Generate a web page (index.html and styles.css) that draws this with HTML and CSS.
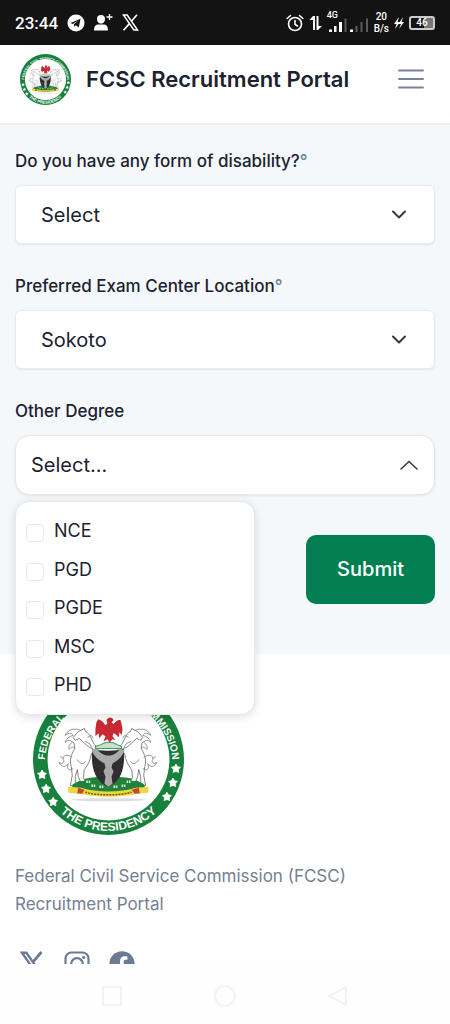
FILE: index.html
```html
<!DOCTYPE html>
<html lang="en">
<head>
<meta charset="utf-8">
<meta name="viewport" content="width=device-width, initial-scale=1">
<title>FCSC Recruitment Portal</title>
<link rel="stylesheet" href="styles.css">
</head>
<body>
<svg class="defs" width="0" height="0" aria-hidden="true">
  <defs>
    <path id="arc-top" d="M11.500 80A63.500 63.500 0 0 1 138.500 80"/>
    <path id="arc-bottom" d="M4 75A71 71 0 0 0 146 75"/>
    <path id="star" d="M0-4.600L1.600-2 4.500-1.300 2.500 1 2.800 4 0 2.800-2.800 4-2.500 1-4.500-1.300-1.600-2Z" stroke="#fff" stroke-linejoin="round" stroke-width=".6"/>
    <g id="horse">
      <path d="M58 64C53 62 50 57 46 54L42 56 40 53C43 50 44 47 48 46L51 44 52 47C57 49 58 56 61 60L65 64 63 68 58 69C57 76 55 80 51 85L50 93 54 101 49 101 45 92 44 85 42 92 42 101 37 101 39 91 38 82C36 76 38 70 41 65 42 61 41 58 39 57" fill="#fff" stroke="#777" stroke-width=".9" stroke-linejoin="round"/>
      <path d="M48 46C40 43 34 46 32 51 36 48 39 49 40 51 36 52 33 54 32 58 35 55 38 56 39 58 36 60 35 62 36 65 38 62 41 62 42 64M39 73C34 69 29 71 30 75 32 78 28 80 26 78 28 83 33 83 35 79 33 84 36 87 40 84M30 74 27 72M54 53 58 51 60 54M52 57 57 60 60 67M44 75C47 80 50 80 52 77" fill="none" stroke="#888" stroke-width=".9"/>
    </g>
    <symbol id="crest" viewBox="0 0 150 150">
      <circle cx="75" cy="75" r="75" fill="#16803c"/>
      <circle cx="75" cy="75" r="60.500" fill="#fff"/>
      <text class="crest-top" text-anchor="middle"><textPath href="#arc-top" startOffset="50%">FEDERAL CIVIL SERVICE COMMISSION</textPath></text>
      <text class="crest-bottom" text-anchor="middle"><textPath href="#arc-bottom" startOffset="50%">THE PRESIDENCY</textPath></text>
      <g fill="#fff">
        <use href="#star" x="9" y="90"/><use href="#star" x="13" y="104"/><use href="#star" x="20" y="117"/>
        <use href="#star" x="142" y="84"/><use href="#star" x="139" y="98"/><use href="#star" x="133" y="112"/>
      </g>
      <ellipse cx="75" cy="115" rx="37" ry="1.500" fill="#ddd"/>
      <path d="M38 103C45 94 58 91 75 93 94 91 106 95 112 103L106 109H44Z" fill="#21823b"/>
      <use href="#horse"/>
      <use href="#horse" transform="translate(149 0) scale(-1 1)"/>
      <path d="M39 100C46 95 56 95 62 99L88 99C94 95 104 95 111 100L108 107H42Z" fill="#21823b"/>
      <path d="M59 64C66 67 83 67 90 64 92 82 88 97 75 102 61 97 57 82 59 64Z" fill="#302e32"/>
      <path d="M58 65 63 64C66 68 70 71 75 71S84 68 87 64L91 66C89 71 86 75 79 79L78 83 80 87 78 92 79 99 75 102 71 99 72 92 70 87 72 83 71 79C64 75 60 71 58 65Z" fill="#aaa"/>
      <path d="M68 60C72 57 79 57 83 60L88 62V64H62V62Z" fill="#c9dfce" stroke="#3f9b5b"/>
      <path d="M73 36C75 32 79 33 80 36L78 38 80 40C82 37 85 35 87 36L88 40 89 45 88 51 86 48 85 53 82 50 80 49 79 52 82 56 79 55 76 58 74 55 70 57 72 52 69 50 66 54 65 49 62 52 62 45 63 38 65 35C68 36 70 38 72 41L74 39Z" fill="#c92932"/>
      <path d="M35 102 48 103C64 108 86 108 102 103L115 102 114 108 103 109C88 113 62 113 47 109L35 108Z" fill="#ecd83c"/>
      <path d="M45 103 51 105 49 109 44 108ZM105 103 98 105 101 109 106 108Z" fill="#c9413a"/>
      <path d="M52 107.500C65 111 85 111 98 107.500" fill="none" stroke="#6d5e20" stroke-width="1.500" stroke-dasharray="2 1"/>
      <path d="M53 97h4M58 101h4M66 102h4M80 102h4M88 101h4M93 97h4" stroke="#e1f0d5" stroke-width="2.500" stroke-dasharray="1.500 .8"/>
    </symbol>
  </defs>
</svg>

<div class="status">
  <div class="status-left">
    <span class="clock">23:44</span>
    <svg width="18" height="18" viewBox="0 0 18 18"><circle cx="9" cy="9" r="8.500" fill="#fff"/><path d="M3.500 9 13.500 4.800 11.800 13.500 8.800 11.300 7.200 12.800 7 10.200 11.500 6.500 5.800 9.900Z" fill="#131313"/></svg>
    <svg width="19" height="18" viewBox="0 0 19 18"><path d="M7 1a4 4 0 0 1 4 4c0 2.800-1.800 4.700-4 4.700S3 7.800 3 5a4 4 0 0 1 4-4ZM0 16.500C0 12 2 10.500 4.500 10.500h5C12 10.500 14 12 14 16.500Z" fill="#fff"/><path d="M15.500 0v6M12.500 3h6" stroke="#fff" stroke-width="1.300"/></svg>
    <svg width="17" height="17" viewBox="0 0 17 17" fill="none" stroke="#fff"><path d="M1.500 1h3.700L15.500 16h-3.700Z" stroke-width="1.500"/><path d="M15 .8 9.600 7M7.500 9.600 1.500 16.200" stroke-width="1.700"/></svg>
  </div>
  <div class="status-right">
    <svg width="18" height="18" viewBox="0 0 18 18" fill="none" stroke="#fff" stroke-width="1.600" stroke-linecap="round"><circle cx="9" cy="10" r="6.500"/><path d="M9 6.500V10.300L11.500 12M1.200 4.500 4.500 1.500M16.800 4.500 13.500 1.500"/></svg>
    <svg width="13" height="16" viewBox="0 0 13 16" fill="#fff"><path d="M4 1h2v14H4V5H.5ZM7.500 1h2v10H13L9 15H7.500Z"/></svg>
    <div class="signals">
      <span class="network">4G</span>
      <svg width="42" height="15" viewBox="0 0 42 15"><path d="M2 12.500h3V15H2ZM7 9h2.500v6H7ZM12 5h3v10h-3ZM23 12.500h3V15h-3Z" fill="#fff"/><path d="M17.500 1.500h2V15h-2ZM28.500 9h2v6h-2ZM33.500 5h2v10h-2ZM39 1.500h2V15h-2Z" fill="#5b5b5b"/></svg>
    </div>
    <span class="speed">20<br>B/s</span>
    <svg width="10" height="12" viewBox="0 0 10 12" fill="#fff"><path d="M5 0 0 7h2.500L1 12 6 5H3.500ZM9 0 4.500 7H7L5 12 10 5H7.500Z"/></svg>
    <span class="battery">46</span>
  </div>
</div>

<div class="page">
  <header class="header">
    <svg class="header-logo" role="img" aria-label="FCSC crest"><use href="#crest"/></svg>
    <h1 class="brand">FCSC Recruitment Portal</h1>
    <button class="menu-button" type="button" aria-label="Open menu">
      <svg width="26" height="20" viewBox="0 0 26 20" stroke="#7b8499" stroke-width="2" stroke-linecap="round"><path d="M1 1.500h24M1 10h24M1 18.500h24"/></svg>
    </button>
  </header>

  <form class="form">
    <div class="field">
      <label class="label" for="disability">Do you have any form of disability?<span class="mark">°</span></label>
      <div class="select-wrap">
        <select class="select" id="disability"><option>Select</option><option>Yes</option><option>No</option></select>
        <svg class="chevron" width="14" height="9" viewBox="0 0 14 9" fill="none" stroke="#343a43" stroke-width="2" stroke-linecap="round" stroke-linejoin="round"><path d="M1 1.500 7 7.500 13 1.500"/></svg>
      </div>
    </div>
    <div class="field">
      <label class="label" for="center">Preferred Exam Center Location<span class="mark">°</span></label>
      <div class="select-wrap">
        <select class="select" id="center"><option>Sokoto</option></select>
        <svg class="chevron" width="14" height="9" viewBox="0 0 14 9" fill="none" stroke="#343a43" stroke-width="2" stroke-linecap="round" stroke-linejoin="round"><path d="M1 1.500 7 7.500 13 1.500"/></svg>
      </div>
    </div>
    <div class="field">
      <label class="label" for="degree">Other Degree</label>
      <div class="select-wrap">
        <button class="multi" id="degree" type="button" aria-expanded="true">
          <span>Select...</span>
          <svg width="18" height="10" viewBox="0 0 18 10" fill="none" stroke="#343a43" stroke-width="1.500" stroke-linecap="round" stroke-linejoin="round"><path d="M1 9 9 1.500 17 9"/></svg>
        </button>
        <div class="options">
          <label class="option"><input class="check" type="checkbox"><span>NCE</span></label>
          <label class="option"><input class="check" type="checkbox"><span>PGD</span></label>
          <label class="option"><input class="check" type="checkbox"><span>PGDE</span></label>
          <label class="option"><input class="check" type="checkbox"><span>MSC</span></label>
          <label class="option"><input class="check" type="checkbox"><span>PHD</span></label>
        </div>
      </div>
    </div>
    <button class="submit" type="submit">Submit</button>
  </form>

  <footer class="footer">
    <svg class="footer-logo" role="img" aria-label="Federal Civil Service Commission crest"><use href="#crest"/></svg>
    <p class="about">Federal Civil Service Commission (FCSC) Recruitment Portal</p>
    <div class="social">
      <a href="#x" aria-label="X"><svg width="26" height="26" viewBox="0 0 26 26" fill="none" stroke="#6b7b93"><path d="M3 1.700h4.500L23 24.300h-4.500Z" stroke-width="2.400"/><path d="M22.500 1 14.300 10.600M11.500 14 2.500 24.800" stroke-width="2.800"/></svg></a>
      <a href="#instagram" aria-label="Instagram"><svg width="26" height="26" viewBox="0 0 26 26" fill="none" stroke="#6b7b93" stroke-width="2.200"><rect x="1.500" y="1.500" width="23" height="23" rx="6"/><circle cx="13" cy="13" r="5.800"/><circle cx="19.700" cy="6.400" r="1.600" fill="#6b7b93" stroke="none"/></svg></a>
      <a href="#facebook" aria-label="Facebook"><svg width="26" height="26" viewBox="0 0 26 26"><circle cx="13" cy="13" r="12.700" fill="#6b7b93"/><path d="M11 26V16.500H7.800V13H11V10.200C11 7 12.900 5.300 15.800 5.300 17 5.300 18.400 5.500 18.400 5.500V8.700H16.800C15.200 8.700 14.700 9.600 14.700 10.700V13H18.200L17.600 16.500H14.700V26Z" fill="#fff"/></svg></a>
    </div>
  </footer>
</div>

<nav class="navbar" aria-label="System">
  <button class="nav-button" type="button" aria-label="Recent apps"><svg width="22" height="22" viewBox="0 0 22 22"><rect x="2" y="2" width="18" height="18"/></svg></button>
  <button class="nav-button" type="button" aria-label="Home"><svg width="22" height="22" viewBox="0 0 22 22"><circle cx="11" cy="11" r="10"/></svg></button>
  <button class="nav-button" type="button" aria-label="Back"><svg width="22" height="22" viewBox="0 0 22 22"><path d="M2 11 19 2V20Z"/></svg></button>
</nav>
</body>
</html>
```
FILE: styles.css
```css
* { box-sizing: border-box; }

body {
  margin: 0;
  height: 100vh;
  display: flex;
  flex-direction: column;
  background: #fff;
  color: #1c2230;
  font-family: Inter, "Liberation Sans", sans-serif;
}

button, select, input { font: inherit; color: inherit; margin: 0; }
button { cursor: pointer; }
svg { display: block; flex: none; }
.defs { position: absolute; }

.status {
  flex: none;
  display: flex;
  align-items: center;
  justify-content: space-between;
  height: 45px;
  padding: 0 15px;
  background: #131313;
  color: #fff;
  font-family: Roboto, sans-serif;
  font-weight: 500;
}
.status-left { display: flex; align-items: center; gap: 9px; }
.clock { font-size: 17px; }
.status-right { display: flex; align-items: center; gap: 5px; }
.signals { position: relative; padding-top: 4px; }
.network { position: absolute; top: -3px; left: 0; font-size: 9px; line-height: 10px; }
.speed { font-size: 10px; line-height: 12px; text-align: center; }
.battery {
  width: 26px;
  border: 2px solid #ccc;
  border-radius: 3px;
  background: linear-gradient(to right, #131313 60%, #777 60%);
  font-size: 10px;
  line-height: 10px;
  text-align: center;
}

.page { flex: 1; min-height: 0; overflow: hidden; }

.header {
  display: flex;
  align-items: center;
  height: 80px;
  padding: 0 26px 10px 20px;
  border-bottom: 2px solid #ebf0f3;
}
.header-logo { width: 51px; height: 51px; }
.brand { flex: 1; margin: 0 0 0 15px; font-size: 22px; line-height: 28px; font-weight: 600; }
.menu-button { padding: 0; border: 0; background: none; }

.crest-top, .crest-bottom { fill: #fff; font-family: "Liberation Sans", sans-serif; font-weight: 700; }
.crest-top { font-size: 10px; }
.crest-bottom { font-size: 12px; }

.form {
  display: flex;
  flex-direction: column;
  gap: 28px;
  padding: 22px 15px 50px;
  background: #f4f8fb;
}
.label { display: block; margin-bottom: 10px; font-size: 17px; line-height: 28px; font-weight: 500; }
.mark { color: #6b8299; }
.select-wrap { position: relative; }
.select {
  display: block;
  width: 100%;
  height: 59px;
  padding: 0 60px 0 25px;
  appearance: none;
  border: 1px solid #e7eaee;
  border-radius: 6px;
  background: #fff;
  box-shadow: 0 1px 2px #00000014;
  font-size: 20px;
}
.chevron { position: absolute; top: 25px; right: 29px; pointer-events: none; }
.multi {
  display: flex;
  align-items: center;
  justify-content: space-between;
  width: 100%;
  height: 60px;
  padding: 0 16px 0 15px;
  border: 1px solid #e4e7eb;
  border-radius: 14px;
  background: #fff;
  box-shadow: 0 1px 3px #00000014;
  font-size: 20px;
}
.options {
  position: absolute;
  z-index: 1;
  top: 66px;
  left: 0;
  display: flex;
  flex-direction: column;
  justify-content: space-between;
  width: 240px;
  height: 214px;
  padding: 15px 10px;
  border: 1px solid #e6e9ec;
  border-radius: 14px;
  background: #fff;
  box-shadow: 0 2px 10px #00000020;
}
.option { display: flex; align-items: flex-start; gap: 10px; font-size: 18px; line-height: 28px; }
.check {
  flex: none;
  width: 18px;
  height: 18px;
  margin-top: 7px;
  appearance: none;
  border: 1px solid #e6e9ec;
  border-radius: 4px;
  background: #fff;
}
.submit {
  align-self: flex-end;
  margin-top: 12px;
  padding: 20px 31px;
  border: 0;
  border-radius: 10px;
  background: #027f52;
  color: #fff;
  font-size: 20px;
  line-height: 29px;
  font-weight: 500;
}

.footer { padding: 30px 15px; color: #748092; }
.footer-logo { width: 151px; height: 151px; margin-left: 18px; }
.about { margin: 27px 0 33px; font-size: 17px; line-height: 28px; }
.social { display: flex; gap: 19px; padding-left: 4px; }

.navbar {
  flex: none;
  display: flex;
  justify-content: center;
  gap: 91px;
  height: 60px;
  padding-top: 21px;
  background: #fefefe;
}
.nav-button { height: 22px; padding: 0; border: 0; background: none; }
.nav-button svg { fill: none; stroke: #f3f3f3; stroke-width: 2; }
```
